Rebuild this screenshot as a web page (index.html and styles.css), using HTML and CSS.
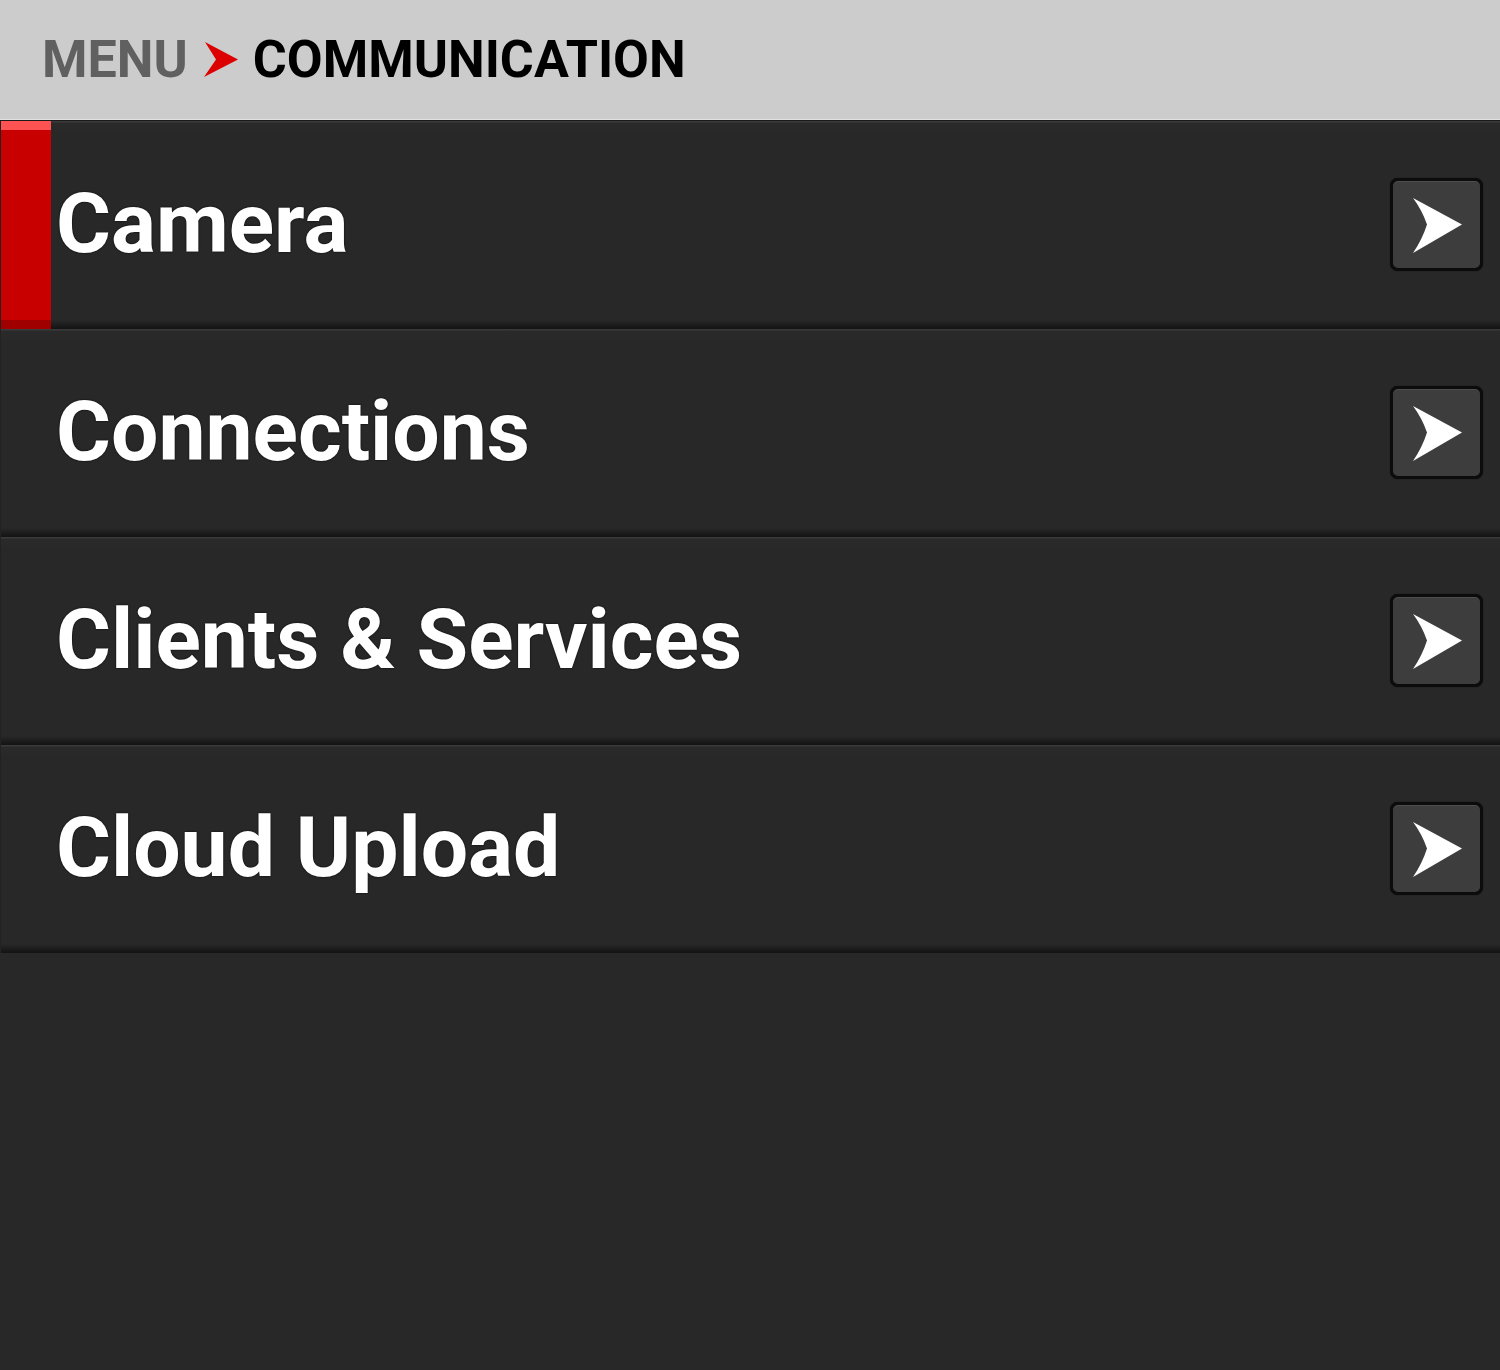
FILE: index.html
```html
<!DOCTYPE html>
<html>
<head>
<meta charset="utf-8">
<link rel="stylesheet" href="styles.css">
</head>
<body>
<header class="crumbs">
  <span class="crumb-parent">MENU</span>
  <svg class="crumb-sep" width="35" height="36" viewBox="0 0 35 36"><path d="M1 0 L34 17.5 L0 35 L12 17.5 Z" fill="#dd0000"/></svg>
  <span class="crumb-current">COMMUNICATION</span>
</header>
<main class="list">
  <div class="row selected">
    <div class="marker"></div>
    <div class="label">Camera</div>
    <div class="go"><svg width="87" height="87" viewBox="3 3 87 87"><path d="M23 20 L72 46.5 L23 75 Q32 62 37 46.5 Q32 32 23 20 Z" fill="#fff"/></svg></div>
  </div>
  <div class="row">
    <div class="marker"></div>
    <div class="label">Connections</div>
    <div class="go"><svg width="87" height="87" viewBox="3 3 87 87"><path d="M23 20 L72 46.5 L23 75 Q32 62 37 46.5 Q32 32 23 20 Z" fill="#fff"/></svg></div>
  </div>
  <div class="row">
    <div class="marker"></div>
    <div class="label">Clients &amp; Services</div>
    <div class="go"><svg width="87" height="87" viewBox="3 3 87 87"><path d="M23 20 L72 46.5 L23 75 Q32 62 37 46.5 Q32 32 23 20 Z" fill="#fff"/></svg></div>
  </div>
  <div class="row">
    <div class="marker"></div>
    <div class="label">Cloud Upload</div>
    <div class="go"><svg width="87" height="87" viewBox="3 3 87 87"><path d="M23 20 L72 46.5 L23 75 Q32 62 37 46.5 Q32 32 23 20 Z" fill="#fff"/></svg></div>
  </div>
</main>
</body>
</html>
```
FILE: styles.css
```css
html, body {
  margin: 0;
  padding: 0;
}
body {
  background: #282828;
  width: 1500px;
  height: 1370px;
  overflow: hidden;
  font-family: Roboto, "Liberation Sans", sans-serif;
}
.crumbs {
  height: 119px;
  background: #cccccc;
  border-bottom: 1px solid #e2e2e2;
  box-shadow: 0 1px 0 #1a1a1a;
  margin-bottom: 1px;
  display: flex;
  align-items: center;
  padding-left: 42px;
  box-sizing: content-box;
}
.crumbs span {
  font-weight: 700;
  font-size: 52px;
  line-height: 1;
  letter-spacing: 0;
}
.crumb-parent {
  color: #606060;
}
.crumb-sep {
  margin: 0 14px 0 16px;
}
.crumb-current {
  color: #000;
  letter-spacing: 0.2px;
}
.list {
  display: flex;
  flex-direction: column;
}
.row {
  height: 208px;
  display: flex;
  align-items: center;
  background: linear-gradient(to bottom, #3a3a3a 0, #3a3a3a 1px, #2a2a2a 2px, #282828 12px, #282828 calc(100% - 9px), #131313 100%);
  border-left: 1px solid #222;
  padding-right: 17px;
}
.marker {
  width: 50px;
  align-self: stretch;
}
.selected .marker {
  background: linear-gradient(to bottom, #ff5252 0, #ff5252 9px, #c80000 9px, #c80000 calc(100% - 9px), #a00000 calc(100% - 9px));
}
.label {
  flex: 1;
  margin-left: 5px;
  color: #fff;
  font-weight: 700;
  font-size: 84px;
  line-height: 1;
  letter-spacing: 0;
  text-shadow: 0 0 2px #000;
  padding-bottom: 2px;
}
.go {
  width: 87px;
  height: 87px;
  border: 3px solid #0c0c0c;
  border-radius: 8px;
  background: #3d3d3d;
  box-shadow: inset 0 1px 0 #4e4e4e, 0 0 1px #000;
  display: flex;
  margin-bottom: 2px;
}
```
